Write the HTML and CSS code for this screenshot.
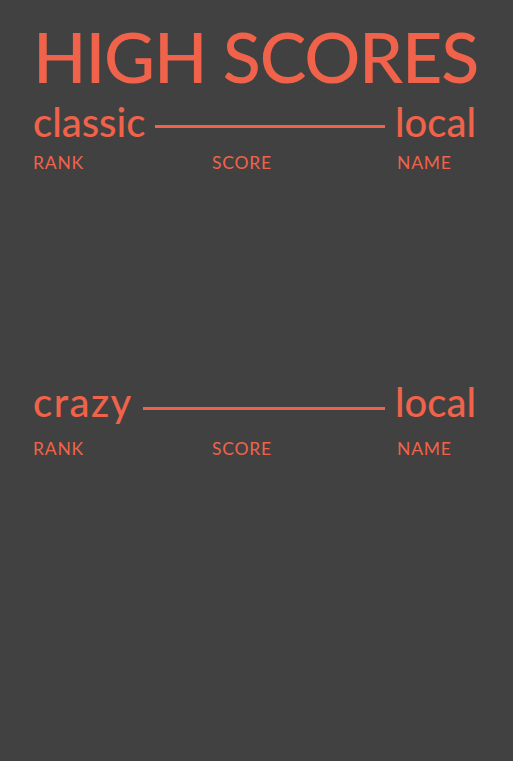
FILE: index.html
```html
<!DOCTYPE html>
<html lang="en">
<head>
<meta charset="utf-8">
<title>High Scores</title>
<link rel="stylesheet" href="styles.css">
</head>
<body>
<main class="page">
  <h1 class="title">HIGH SCORES</h1>
  <section class="board">
    <div class="board-head">
      <span class="mode">classic</span>
      <span class="rule"></span>
      <span class="scope">local</span>
    </div>
    <div class="cols">
      <span>RANK</span>
      <span>SCORE</span>
      <span>NAME</span>
    </div>
    <div class="rows"></div>
  </section>
  <section class="board board--second">
    <div class="board-head">
      <span class="mode mode--wide">crazy</span>
      <span class="rule"></span>
      <span class="scope">local</span>
    </div>
    <div class="cols">
      <span>RANK</span>
      <span>SCORE</span>
      <span>NAME</span>
    </div>
    <div class="rows"></div>
  </section>
</main>
</body>
</html>
```
FILE: styles.css
```css
html, body {
  margin: 0;
  padding: 0;
  background: #414141;
}
body {
  width: 513px;
  height: 761px;
  font-family: Lato, "Open Sans", sans-serif;
  color: #f0634a;
}
.page {
  padding: 21px 37px 0 33px;
}
.title {
  margin: 0;
  font-weight: 500;
  font-size: 70px;
  line-height: 70px;
  letter-spacing: -1.2px;
  white-space: nowrap;
}
.board-head {
  display: flex;
  align-items: center;
  margin-top: 9px;
  font-size: 40px;
  line-height: 44px;
  font-weight: 500;
}
.mode--wide {
  letter-spacing: 1.5px;
}
.rule {
  flex: 1;
  height: 3px;
  background: #f0634a;
  margin: 9px 10px 0 10px;
}
.cols {
  display: grid;
  grid-template-columns: 179px 185px 1fr;
  font-size: 17.5px;
  line-height: 20px;
  letter-spacing: 0.8px;
  margin-top: 9px;
}
.rows {
  height: 207px;
}
.board--second .board-head {
  margin-top: 0;
}
.board--second .rule {
  margin-top: 12px;
}
.board--second .cols {
  margin-top: 15px;
}
```
